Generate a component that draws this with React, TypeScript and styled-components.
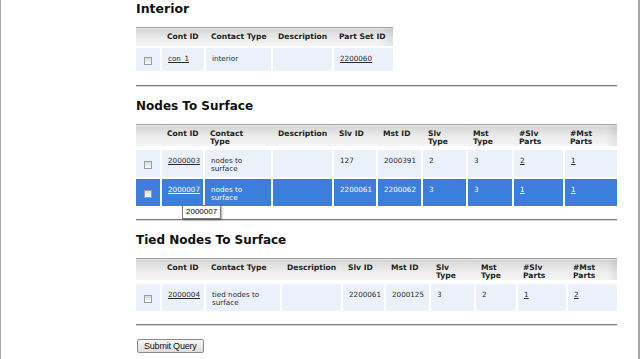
import styled, { createGlobalStyle } from "styled-components";

const GlobalStyle = createGlobalStyle`
  html, body {
    margin: 0;
    padding: 0;
    background: #fff;
  }
`;

type Col = { label: string; width: number };
type Value = { text: string; link?: boolean; tip?: string };
type Row = { cells: Value[]; selected?: boolean };

const interiorCols: Col[] = [
  { label: "", width: 25 },
  { label: "Cont ID", width: 44 },
  { label: "Contact Type", width: 67 },
  { label: "Description", width: 61 },
  { label: "Part Set ID", width: 60 },
];

const interiorRows: Row[] = [
  {
    cells: [
      { text: "con_1", link: true },
      { text: "interior" },
      { text: "" },
      { text: "2200060", link: true },
    ],
  },
];

const nodesCols: Col[] = [
  { label: "", width: 25 },
  { label: "Cont ID", width: 43 },
  { label: "Contact\nType", width: 68 },
  { label: "Description", width: 61 },
  { label: "Slv ID", width: 44 },
  { label: "Mst ID", width: 45 },
  { label: "Slv\nType", width: 45 },
  { label: "Mst\nType", width: 46 },
  { label: "#Slv\nParts", width: 51 },
  { label: "#Mst\nParts", width: 53 },
];

const nodesRows: Row[] = [
  {
    cells: [
      { text: "2000003", link: true },
      { text: "nodes to\nsurface" },
      { text: "" },
      { text: "127" },
      { text: "2000391" },
      { text: "2" },
      { text: "3" },
      { text: "2", link: true },
      { text: "1", link: true },
    ],
  },
  {
    selected: true,
    cells: [
      { text: "2000007", link: true, tip: "2000007" },
      { text: "nodes to\nsurface" },
      { text: "" },
      { text: "2200061" },
      { text: "2200062" },
      { text: "3" },
      { text: "3" },
      { text: "1", link: true },
      { text: "1", link: true },
    ],
  },
];

const tiedCols: Col[] = [
  { label: "", width: 25 },
  { label: "Cont ID", width: 44 },
  { label: "Contact Type", width: 76 },
  { label: "Description", width: 61 },
  { label: "Slv ID", width: 43 },
  { label: "Mst ID", width: 45 },
  { label: "Slv\nType", width: 45 },
  { label: "Mst\nType", width: 42 },
  { label: "#Slv\nParts", width: 50 },
  { label: "#Mst\nParts", width: 50 },
];

const tiedRows: Row[] = [
  {
    cells: [
      { text: "2000004", link: true },
      { text: "tied nodes to\nsurface" },
      { text: "" },
      { text: "2200061" },
      { text: "2000125" },
      { text: "3" },
      { text: "2" },
      { text: "1", link: true },
      { text: "2", link: true },
    ],
  },
];

const Frame = styled.div`
  box-sizing: border-box;
  width: 640px;
  height: 359px;
  overflow: hidden;
  border-left: 1px solid #a8a8a8;
  border-right: 2px solid #a8a8a8;
  padding-left: 135px;
  font-family: "DejaVu Sans", Verdana, sans-serif;
  color: #222;
`;

const Content = styled.form`
  width: 481px;
  display: flex;
  flex-direction: column;
  align-items: flex-start;
`;

const Title = styled.h2<{ $big?: boolean }>`
  margin: ${(p) => (p.$big ? "1px 0 11px" : "12px 0 11px")};
  font-size: ${(p) => (p.$big ? "12.5px" : "12px")};
  line-height: ${(p) => (p.$big ? "15px" : "14px")};
  font-weight: bold;
  color: #111;
`;

const Grid = styled.table<{ $w: number }>`
  width: ${(p) => p.$w}px;
  border-collapse: collapse;
  table-layout: fixed;
  border-spacing: 0;
`;

const HeadCell = styled.th`
  text-align: left;
  vertical-align: top;
  padding: 5px 3px 3px 6px;
  font-size: 7.6px;
  font-weight: bold;
  color: #1e1e1e;
  background: linear-gradient(#d4d4d4, #ececec 55%, #f6f6f6);
  border-top: 1px solid #a2a2a2;
  border-bottom: 1px solid #8e8e8e;
  &:last-child {
    background: linear-gradient(90deg, rgba(0, 0, 0, 0) 80%, rgba(0, 0, 0, 0.07)),
      linear-gradient(#d4d4d4, #ececec 55%, #f6f6f6);
  }
`;

const HeadLabel = styled.div<{ $tall?: boolean }>`
  height: ${(p) => (p.$tall ? 13 : 10)}px;
  line-height: 7.5px;
  white-space: pre-line;
  overflow: visible;
`;

const BodyRow = styled.tr<{ $selected?: boolean; $first?: boolean; $tall?: boolean }>`
  height: 24px;
  background: ${(p) => (p.$selected ? "#3b7edc" : "#eaf1fb")};
  color: ${(p) => (p.$selected ? "#fff" : "#2a2a2a")};
  & > td {
    border-top: ${(p) => (p.$first && p.$tall ? 4 : 2)}px solid #fff;
  }
`;

const Cell = styled.td`
  vertical-align: top;
  padding: 7px 3px 4px 6px;
  font-size: 7.2px;
  line-height: 8px;
  white-space: pre-line;
  border-left: 2px solid #fff;
`;

const BoxCell = styled.td`
  vertical-align: middle;
  text-align: center;
  padding: 0;
`;

const Tick = styled.span`
  display: inline-block;
  width: 6px;
  height: 6px;
  margin-top: 2px;
  border: 1px solid #9c9c9c;
  background: linear-gradient(#d9d9d9, #fafafa);
`;

const Anchor = styled.a`
  position: relative;
  color: inherit;
  text-decoration: underline;
  cursor: pointer;
`;

const Tip = styled.span`
  position: absolute;
  left: 14px;
  top: 20px;
  padding: 1px 3px 2px;
  background: #fff;
  border: 1px solid #7a7a7a;
  box-shadow: 1px 1px 2px rgba(0, 0, 0, 0.35);
  font-family: "Liberation Sans", Arial, sans-serif;
  font-size: 8px;
  line-height: 9px;
  color: #000;
  white-space: nowrap;
  z-index: 2;
`;

const Rule = styled.hr<{ $gap?: number }>`
  width: 481px;
  height: 0;
  margin: ${(p) => p.$gap ?? 12}px 0 0;
  border: 0;
  border-top: 1px solid #7c7c7c;
  border-bottom: 1px solid #d6d6d6;
`;

const Submit = styled.button`
  margin: 13px 0 0 1px;
  height: 14px;
  padding: 0 6px;
  font-family: "Liberation Sans", Arial, sans-serif;
  font-size: 9px;
  letter-spacing: -0.2px;
  color: #111;
  border: 1px solid #8a8a8a;
  border-radius: 2px;
  background: linear-gradient(#f7f7f7, #dedede);
`;

function DataTable({ cols, rows, tall }: { cols: Col[]; rows: Row[]; tall?: boolean }) {
  const total = cols.reduce((s, c) => s + c.width, 0);
  return (
    <Grid $w={total}>
      <colgroup>
        {cols.map((c, i) => (
          <col key={i} style={{ width: c.width }} />
        ))}
      </colgroup>
      <thead>
        <tr>
          {cols.map((c, i) => (
            <HeadCell key={i}>
              <HeadLabel $tall={tall}>{c.label}</HeadLabel>
            </HeadCell>
          ))}
        </tr>
      </thead>
      <tbody>
        {rows.map((r, i) => (
          <BodyRow key={i} $selected={r.selected} $first={i === 0} $tall={tall}>
            <BoxCell>
              <Tick />
            </BoxCell>
            {r.cells.map((v, j) => (
              <Cell key={j}>
                {v.link ? (
                  <Anchor>
                    {v.text}
                    {v.tip && <Tip>{v.tip}</Tip>}
                  </Anchor>
                ) : (
                  v.text
                )}
              </Cell>
            ))}
          </BodyRow>
        ))}
      </tbody>
    </Grid>
  );
}

export default function App() {
  return (
    <>
      <GlobalStyle />
      <Frame>
        <Content onSubmit={(e) => e.preventDefault()}>
          <Title $big>Interior</Title>
          <DataTable cols={interiorCols} rows={interiorRows} />
          <Rule $gap={14} />

          <Title>Nodes To Surface</Title>
          <DataTable cols={nodesCols} rows={nodesRows} tall />
          <Rule $gap={13} />

          <Title>Tied Nodes To Surface</Title>
          <DataTable cols={tiedCols} rows={tiedRows} tall />
          <Rule $gap={13} />

          <Submit type="submit">Submit Query</Submit>
        </Content>
      </Frame>
    </>
  );
}
